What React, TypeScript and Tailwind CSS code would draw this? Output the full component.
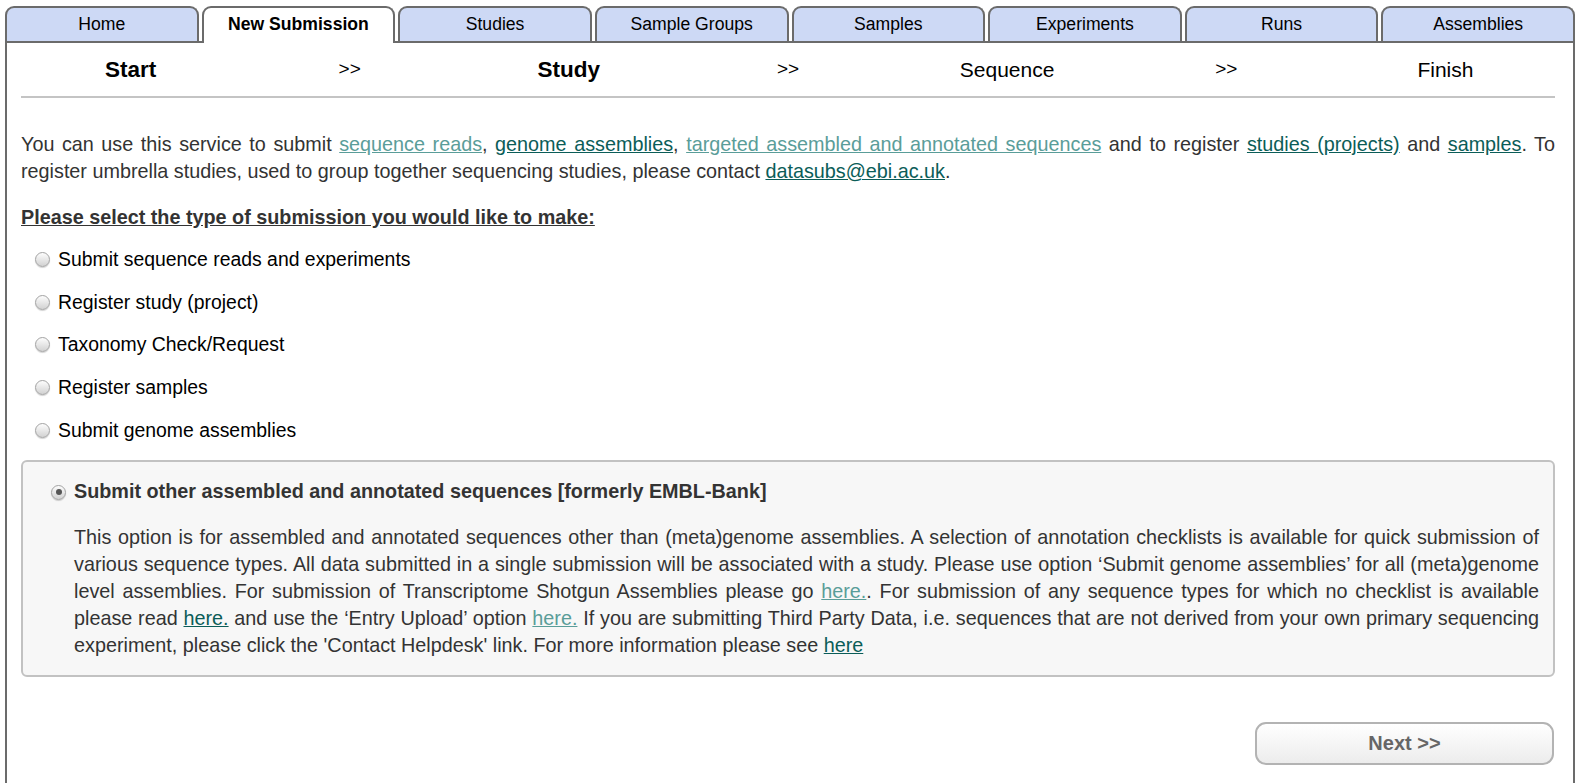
import React from "react"

const tabs = ["Home", "New Submission", "Studies", "Sample Groups", "Samples", "Experiments", "Runs", "Assemblies"]

const steps = [
    { label: "Start", bold: true },
    { label: ">>", bold: false, small: true },
    { label: "Study", bold: true },
    { label: ">>", bold: false, small: true },
    { label: "Sequence", bold: false },
    { label: ">>", bold: false, small: true },
    { label: "Finish", bold: false }
]

const options = [
    "Submit sequence reads and experiments",
    "Register study (project)",
    "Taxonomy Check/Request",
    "Register samples",
    "Submit genome assemblies"
]

function Radio({ checked = false }: { checked?: boolean }) {
    return (
        <span className="inline-flex h-[15px] w-[15px] shrink-0 items-center justify-center rounded-full border border-[#a3a3a3] bg-gradient-to-b from-[#fdfdfd] to-[#d2d2d2] shadow-[0_1px_1px_rgba(0,0,0,0.18)]">
            {checked && <span className="h-[6px] w-[6px] rounded-full bg-[#555]" />}
        </span>
    )
}

function Link({ children, light = false }: { children: React.ReactNode; light?: boolean }) {
    return (
        <a href="#" className={light ? "text-[#5a9d99] underline" : "text-[#0b5d58] underline"}>
            {children}
        </a>
    )
}

export default function App() {
    return (
        <div className="min-h-[783px] bg-white px-[5px] pt-[6px] font-['Liberation_Sans',Arial,sans-serif]">
            {/* Tabs */}
            <div className="flex gap-[3px]">
                {tabs.map((t) => {
                    const active = t === "New Submission"
                    return (
                        <div
                            key={t}
                            className={
                                "relative flex h-[35px] flex-1 items-center justify-center rounded-t-[9px] border-2 border-b-0 border-[#6b6b6b] text-[17.6px] text-black " +
                                (active ? "bg-white font-bold" : "bg-[#cdd9f5]")
                            }
                        >
                            {t}
                            {active && <span className="absolute -bottom-[2px] left-0 right-0 h-[2px] bg-white" />}
                        </div>
                    )
                })}
            </div>

            {/* Panel */}
            <div className="min-h-[742px] border-2 border-b-0 border-[#6b6b6b] pl-[14px] pr-[18px]">
                {/* Steps */}
                <div className="grid h-[55px] grid-cols-7 items-center border-b-2 border-[#c4c4c4] text-center text-black">
                    {steps.map((s, i) => (
                        <div key={i} className={s.small ? "text-[19px]" : s.bold ? "text-[22.5px] font-bold" : "text-[21px]"}>
                            {s.label}
                        </div>
                    ))}
                </div>

                <p className="mt-[33px] text-justify text-[19.8px] leading-[27px] text-[#333]">
                    You can use this service to submit <Link light>sequence reads</Link>, <Link>genome assemblies</Link>,{" "}
                    <Link light>targeted assembled and annotated sequences</Link> and to register <Link>studies (projects)</Link> and{" "}
                    <Link>samples</Link>. To register umbrella studies, used to group together sequencing studies, please contact{" "}
                    <Link>datasubs@ebi.ac.uk</Link>.
                </p>

                <h3 className="mt-[19px] text-[19.8px] font-bold leading-[27px] text-[#333] underline">
                    Please select the type of submission you would like to make:
                </h3>

                <div className="mt-[7px]">
                    {options.map((o) => (
                        <label key={o} className="flex h-[42.75px] items-center gap-[8px] pl-[14px] text-[19.4px] text-black">
                            <Radio />
                            {o}
                        </label>
                    ))}
                </div>

                {/* Selected option box */}
                <div className="mt-[8px] rounded-[6px] border-2 border-[#c2c2c2] bg-[#f7f7f7] pb-[16px] pl-[28px] pr-[14px] pt-[17px]">
                    <label className="flex h-[27px] items-center gap-[8px] text-[19.8px] font-bold text-[#333]">
                        <Radio checked />
                        Submit other assembled and annotated sequences [formerly EMBL-Bank]
                    </label>
                    <p className="mt-[18px] pl-[23px] text-justify text-[19.8px] leading-[27px] text-[#333]">
                        This option is for assembled and annotated sequences other than (meta)genome assemblies. A selection of annotation
                        checklists is available for quick submission of various sequence types. All data submitted in a single submission
                        will be associated with a study. Please use option ‘Submit genome assemblies’ for all (meta)genome level assemblies.
                        For submission of Transcriptome Shotgun Assemblies please go <Link light>here.</Link>. For submission of any
                        sequence types for which no checklist is available please read <Link>here.</Link> and use the ‘Entry Upload’
                        option <Link light>here.</Link> If you are submitting Third Party Data, i.e. sequences that are not derived from
                        your own primary sequencing experiment, please click the 'Contact Helpdesk' link. For more information please see{" "}
                        <Link>here</Link>
                    </p>
                </div>

                <div className="mt-[45px] flex justify-end pr-[1px]">
                    <button className="h-[43px] w-[299px] rounded-[11px] border-2 border-[#b3b3b3] bg-gradient-to-b from-white to-[#ececec] text-[20px] font-bold text-[#666]">
                        Next &gt;&gt;
                    </button>
                </div>
            </div>
        </div>
    )
}
